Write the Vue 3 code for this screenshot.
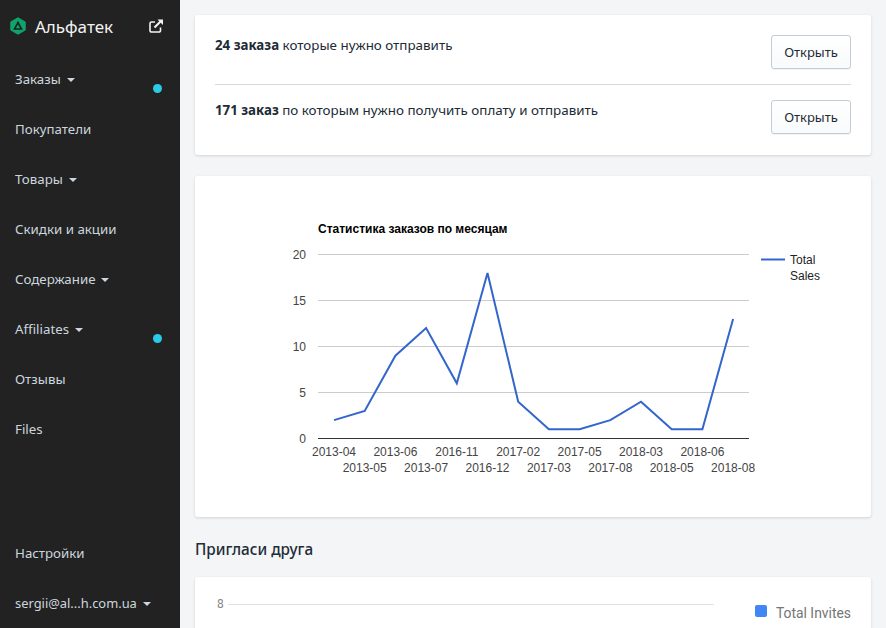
<template>
  <div class="layout">
    <aside class="sidebar">
      <div class="brand">
        <svg class="logo" width="18" height="18" viewBox="0 0 18 18">
          <path d="M9 .8 16.2 4.900v8.200L9 17.200 1.800 13.100V4.900z" fill="#12a36d" stroke="#12a36d" stroke-linejoin="round" />
          <path d="M9 5.500 12.500 12H5.500z" fill="none" stroke="#14261f" stroke-width="1.600" />
        </svg>
        <span class="brand-name">Альфатек</span>
        <svg class="ext" width="16" height="16" viewBox="0 0 16 16" fill="none" stroke="#f2f2f2">
          <path d="M12.500 9.500v3a1.500 1.500 0 0 1-1.500 1.500H3.500A1.500 1.500 0 0 1 2 12.500V5.500A1.500 1.500 0 0 1 3.500 4H7" stroke-width="1.600" />
          <path d="M6.500 9.500 13 3" stroke-width="2.200" />
          <path d="M9.500 1.500h5.500v5.500z" fill="#f2f2f2" stroke="none" />
        </svg>
      </div>
      <nav class="nav">
        <a v-for="item in menu" :key="item.label" class="nav-item">
          {{ item.label }}<i v-if="item.caret" class="caret"></i>
          <b v-if="item.dot" class="dot"></b>
        </a>
      </nav>
      <div class="nav bottom">
        <a class="nav-item">Настройки</a>
        <a class="nav-item account">sergii@al...h.com.ua<i class="caret"></i></a>
      </div>
    </aside>

    <main class="content">
      <section class="card todo">
        <div v-for="row in todos" :key="row.count" class="todo-row">
          <p><strong>{{ row.count }}</strong> {{ row.text }}</p>
          <button>Открыть</button>
        </div>
      </section>

      <section class="card chart-card">
        <svg class="chart" width="676" height="341" viewBox="0 0 676 341">
          <text x="123" y="57" class="chart-title">Статистика заказов по месяцам</text>
          <g v-for="tick in ticks" :key="tick.label">
            <line x1="123" x2="554" :y1="tick.y" :y2="tick.y" :stroke="tick.label === 0 ? '#333' : '#ccc'" />
            <text x="111" :y="tick.y + 4.500" text-anchor="end" class="axis">{{ tick.label }}</text>
          </g>
          <polyline :points="linePoints" fill="none" stroke="#3366cc" stroke-width="2" />
          <text
            v-for="(p, i) in points"
            :key="p.label"
            :x="p.x"
            :y="i % 2 ? 296 : 280"
            text-anchor="middle"
            class="axis"
          >{{ p.label }}</text>
          <line x1="566" x2="590" y1="83.500" y2="83.500" stroke="#3366cc" stroke-width="2" />
          <text x="595" y="87.500" class="legend">Total</text>
          <text x="595" y="103.500" class="legend">Sales</text>
        </svg>
      </section>

      <h2 class="title">Пригласи друга</h2>

      <section class="card invites">
        <div class="invites-plot">
          <span class="invites-tick">8</span>
          <span class="invites-line"></span>
        </div>
        <div class="invites-legend"><i></i>Total Invites</div>
      </section>
    </main>
  </div>
</template>

<script setup>
import { computed } from 'vue';

const menu = [
  { label: 'Заказы', caret: true, dot: true },
  { label: 'Покупатели' },
  { label: 'Товары', caret: true },
  { label: 'Скидки и акции' },
  { label: 'Содержание', caret: true },
  { label: 'Affiliates', caret: true, dot: true },
  { label: 'Отзывы' },
  { label: 'Files' },
];

const todos = [
  { count: '24 заказа', text: 'которые нужно отправить' },
  { count: '171 заказ', text: 'по которым нужно получить оплату и отправить' },
];

const ticks = [20, 15, 10, 5, 0].map((label) => ({
  label,
  y: 262.500 - label * 9.200,
}));

const sales = [
  ['2013-04', 2], ['2013-05', 3], ['2013-06', 9], ['2013-07', 12],
  ['2016-11', 6], ['2016-12', 18], ['2017-02', 4], ['2017-03', 1],
  ['2017-05', 1], ['2017-08', 2], ['2018-03', 4], ['2018-05', 1],
  ['2018-06', 1], ['2018-08', 13],
];

const points = sales.map(([label, value], i) => ({
  label,
  x: 139 + i * 30.700,
  y: 262.500 - value * 9.200,
}));

const linePoints = computed(() => points.map((p) => `${p.x},${p.y}`).join(' '));
</script>

<style>
html, body {
  margin: 0;
  height: 100%;
  overflow: hidden;
  background: #f4f5f7;
}
</style>

<style scoped>
.layout {
  display: flex;
  height: 628px;
  overflow: hidden;
  font-family: "Noto Sans", "Liberation Sans", sans-serif;
}
.sidebar {
  flex: 0 0 180px;
  display: flex;
  flex-direction: column;
  background: #222;
  color: #ccd6de;
  font-size: 13.300px;
}
.brand {
  display: flex;
  align-items: center;
  height: 52px;
  padding: 0 16px 0 9px;
}
.brand-name {
  margin-left: 8px;
  flex: 1;
  font-size: 17px;
  color: #f2f2f2;
}
.nav {
  display: flex;
  flex-direction: column;
  padding-top: 2px;
}
.nav.bottom {
  margin-top: auto;
  padding: 0;
}
.nav-item {
  position: relative;
  display: block;
  height: 50px;
  line-height: 50px;
  padding-left: 15px;
}
.account {
  font-size: 12.900px;
}
.caret {
  display: inline-block;
  margin-left: 6px;
  vertical-align: 2px;
  border: 4px solid transparent;
  border-top-color: #ccd6de;
  border-bottom-width: 0;
}
.dot {
  position: absolute;
  left: 153px;
  top: 30px;
  width: 9px;
  height: 9px;
  border-radius: 50%;
  background: #2bcbe8;
}
.content {
  flex: 1;
  min-width: 0;
  padding: 15px;
}
.card {
  background: #fff;
  border-radius: 3px;
  box-shadow: 0 1px 3px rgba(0, 0, 0, 0.14);
}
.todo {
  height: 140px;
  box-sizing: border-box;
  padding: 20px;
  margin-bottom: 21px;
}
.todo-row {
  display: flex;
  justify-content: space-between;
  align-items: flex-start;
  height: 49px;
  color: #212b36;
  font-size: 13.400px;
}
.todo-row + .todo-row {
  border-top: 1px solid #d3dbe2;
  padding-top: 15px;
  height: 35px;
}
.todo-row p {
  margin: 0;
  line-height: 20px;
}
.todo-row strong {
  font-weight: 700;
  font-size: 13.300px;
}
.todo-row button {
  width: 80px;
  height: 34px;
  border: 1px solid #c4cdd5;
  border-radius: 3px;
  background: linear-gradient(#fff, #f9fafb);
  color: #212b36;
  font: 13px "Noto Sans", "Liberation Sans", sans-serif;
  box-shadow: 0 1px 0 rgba(22, 29, 37, 0.05);
}
.chart-card {
  height: 341px;
}
.chart {
  display: block;
  font-family: "Liberation Sans", Arial, sans-serif;
}
.chart-title {
  font-size: 12px;
  font-weight: 700;
  fill: #000;
}
.axis {
  font-size: 12px;
  fill: #444;
}
.legend {
  font-size: 12px;
  fill: #222;
}
.title {
  margin: 0;
  padding: 22px 0 17px;
  height: 21px;
  line-height: 21px;
  font-size: 15.300px;
  font-weight: 500;
  color: #212b36;
}
.invites {
  position: relative;
  display: flex;
  justify-content: space-between;
  height: 120px;
  padding: 20px 20px 0 22px;
}
.invites-plot {
  display: flex;
  align-items: center;
  flex: 0 0 497px;
  height: 14px;
  gap: 4px;
  font-family: Roboto, sans-serif;
  font-size: 12px;
  color: #888;
}
.invites-line {
  flex: 1;
  height: 1px;
  background: #e2e2e2;
}
.invites-legend {
  display: flex;
  align-items: flex-start;
  height: 20px;
  font-family: Roboto, sans-serif;
  font-size: 13.900px;
  line-height: 32px;
  color: #757575;
}
.invites-legend i {
  width: 12px;
  height: 12px;
  margin: 8px 9px 0 0;
  border-radius: 2px;
  background: #4285f4;
}
</style>
